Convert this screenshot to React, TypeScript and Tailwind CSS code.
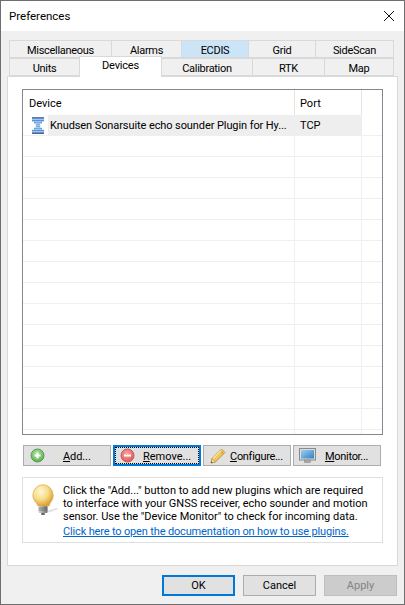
const font = { fontFamily: 'Roboto, "Liberation Sans", sans-serif' };

function Tab({ label, w, active }: { label: string; w: string; active?: boolean }) {
  return (
    <div className={`${w} h-[18px] pt-[3px] tracking-[-0.3px] flex items-center justify-center border border-[#d9d9d9] -ml-px first:ml-0 ${active ? "bg-[#cce4f7]" : "bg-[#f0f0f0]"}`}>
      {label}
    </div>
  );
}

// dotted blue hourglass: rows of small squares, narrow at the waist
function Hourglass() {
  const rows = [
    [0, 6],
    [0, 6],
    [1, 5],
    [2, 4],
    [2, 4],
    [1, 5],
    [0, 6],
    [0, 6],
  ];
  return (
    <svg width="12" height="17" viewBox="0 0 12 17">
      <rect x="0" y="0" width="12" height="1" fill="#6f7f95" />
      <rect x="0" y="16" width="12" height="1" fill="#7a5a48" />
      {rows.map(([from, to], r) =>
        Array.from({ length: to - from }).map((_, c) => (
          <rect key={`${r}-${c}`} x={(from + c) * 2 + 0.2} y={r * 2 + 0.8} width="1.6" height="1.6" fill="#2f78cf" />
        ))
      )}
      <rect x="3" y="5" width="6" height="7" fill="#bcd3ee" opacity="0.35" />
    </svg>
  );
}

function PlusIcon() {
  return (
    <svg width="15" height="15" viewBox="0 0 15 15">
      <defs>
        <radialGradient id="gp" cx="45%" cy="35%" r="70%">
          <stop offset="0" stopColor="#b4e39f" />
          <stop offset="1" stopColor="#4fae4a" />
        </radialGradient>
      </defs>
      <circle cx="7.500" cy="7.500" r="6.500" fill="url(#gp)" stroke="#5d9a55" />
      <path d="M7.500 4.500v6M4.500 7.500h6" stroke="#fff" strokeWidth="2" />
    </svg>
  );
}

function MinusIcon() {
  return (
    <svg width="15" height="15" viewBox="0 0 15 15">
      <defs>
        <radialGradient id="gm" cx="45%" cy="35%" r="70%">
          <stop offset="0" stopColor="#f7a6a0" />
          <stop offset="1" stopColor="#e2504c" />
        </radialGradient>
      </defs>
      <circle cx="7.500" cy="7.500" r="6.500" fill="url(#gm)" stroke="#b9605c" />
      <path d="M4 7.500h7" stroke="#fff" strokeWidth="2" />
    </svg>
  );
}

function PencilIcon() {
  return (
    <svg width="16" height="16" viewBox="0 0 16 16">
      <path d="M1 15l1-4.500L11.500 1 15 4.500 5.500 14z" fill="#eec65a" stroke="#b58d33" strokeWidth="0.8" />
      <path d="M10 2.500L13.500 6" stroke="#d9a24a" strokeWidth="1.600" />
      <path d="M3.200 10.500L11.500 2.200" stroke="#fbe9a8" strokeWidth="1.200" />
      <path d="M1 15l1-4.500 3.500 3.500z" fill="#f3dcb0" stroke="#b58d33" strokeWidth="0.6" />
      <path d="M1 15l.4-1.800 1.400 1.400z" fill="#5a4a30" />
    </svg>
  );
}

function MonitorIcon() {
  return (
    <svg width="17" height="16" viewBox="0 0 17 16">
      <defs>
        <linearGradient id="gs" x1="0" y1="0" x2="1" y2="1">
          <stop offset="0" stopColor="#9fd0f2" />
          <stop offset="1" stopColor="#2f7fc4" />
        </linearGradient>
      </defs>
      <rect x="0.500" y="0.500" width="16" height="11.500" fill="#dcdcdc" stroke="#8a8a8a" />
      <rect x="2" y="2" width="13" height="8.500" fill="url(#gs)" />
      <rect x="5.500" y="12" width="6" height="2.500" fill="#a8a8a8" stroke="#808080" strokeWidth="0.5" />
    </svg>
  );
}

function BulbIcon() {
  return (
    <svg width="28" height="32" viewBox="0 0 28 32">
      <defs>
        <radialGradient id="gb" cx="38%" cy="32%" r="68%">
          <stop offset="0" stopColor="#fff6d2" />
          <stop offset="0.55" stopColor="#f7dc8a" />
          <stop offset="1" stopColor="#dca236" />
        </radialGradient>
        <linearGradient id="gh" x1="0" y1="0" x2="1" y2="0">
          <stop offset="0" stopColor="#d8d8d8" />
          <stop offset="1" stopColor="#6f6f6f" />
        </linearGradient>
      </defs>
      <path d="M15 27c3-1 7-3 10-3 1 0 1 1 0 1.500-3 1.500-7 3-10 3z" fill="#cfcfcf" opacity="0.6" />
      <path d="M.8 11.500a10.200 10.800 0 0 1 20.400 0c0 5-3.500 7-4.200 10.500H6C5 18.500.8 16.500.8 11.500z" fill="url(#gb)" stroke="#dcaa48" strokeWidth="0.7" />
      <rect x="6.500" y="22" width="9" height="7" rx="1" fill="url(#gh)" />
      <path d="M6.500 24h9M6.500 26h9" stroke="#555" strokeWidth="0.6" />
      <rect x="9" y="29" width="4" height="2" rx="1" fill="#666" />
    </svg>
  );
}

function ActionButton({ icon, u, post, focused, textClass, padClass }: { icon: React.ReactNode; u: string; post: string; focused?: boolean; textClass: string; padClass: string }) {
  return (
    <div className={`w-[88px] h-[21px] bg-[#e1e1e1] flex items-center ${focused ? "border-2 border-[#0078d7] outline-1 outline-dotted -outline-offset-3 outline-black" : "border border-[#adadad]"}`}>
      <div className={`shrink-0 flex items-center ${padClass}`}>{icon}</div>
      <span className={`whitespace-nowrap pt-[2px] ${textClass}`}>
        <span className="underline">{u}</span>
        {post}
      </span>
    </div>
  );
}

function DialogButton({ label, focused, disabled }: { label: string; focused?: boolean; disabled?: boolean }) {
  return (
    <div
      className={`w-[73px] h-[21px] flex items-center justify-center ${
        focused ? "border-2 border-[#0078d7] bg-[#e1e1e1]" : disabled ? "border border-[#bfbfbf] bg-[#cccccc] text-[#838383]" : "border border-[#adadad] bg-[#e1e1e1]"
      }`}
    >
      {label}
    </div>
  );
}

export default function App() {
  const row1 = [
    { label: "Miscellaneous", w: "w-[103px]" },
    { label: "Alarms", w: "w-[71px]" },
    { label: "ECDIS", w: "w-[68px]", active: true },
    { label: "Grid", w: "w-[68px]" },
    { label: "SideScan", w: "w-[79px]" },
  ];
  const emptyRows = Array.from({ length: 14 });

  return (
    <div style={font} className="w-[405px] h-[605px] bg-[#f0f0f0] border border-[#6e6e6e] text-[11px] leading-[16px] text-black flex flex-col overflow-hidden">
      <div className="h-[30px] bg-white flex items-center justify-between pl-[8px] pr-[9px] shrink-0">
        <span className="text-[11.5px]">Preferences</span>
        <svg width="12" height="12" viewBox="0 0 12 12">
          <path d="M1 1l10 10M11 1L1 11" stroke="#111" strokeWidth="1" />
        </svg>
      </div>

      <div className="mt-[9px] pl-[8px] flex shrink-0">
        {row1.map((t) => (
          <Tab key={t.label} {...t} />
        ))}
      </div>
      <div className="pl-[8px] flex shrink-0 h-[18px] relative z-10">
        <Tab label="Units" w="w-[71px]" />
        <div className="w-[83px] h-[21px] -mt-[2px] -ml-px pb-[2px] tracking-[-0.2px] flex items-center justify-center bg-white border border-[#d9d9d9] border-b-0 relative z-10">
          Devices
        </div>
        <Tab label="Calibration" w="w-[92px]" />
        <Tab label="RTK" w="w-[73px]" />
        <Tab label="Map" w="w-[70px]" />
      </div>

      <div className="mx-[6px] h-[490px] bg-white border border-[#d9d9d9] px-[14px] pt-[12px] shrink-0">
        <div className="h-[346px] border border-[#828790] overflow-hidden">
          <div className="h-[25px] flex items-center">
            <div className="w-[272px] pl-[6px] pt-[2px] h-full flex items-center border-r border-[#e5e5e5]">Device</div>
            <div className="w-[67px] pl-[5px] pt-[2px] h-full flex items-center border-r border-[#e5e5e5]">Port</div>
          </div>
          <div className="h-[21px] flex items-center border-b border-[#efefef]">
            <div className="w-[25px] h-full flex items-center pl-[9px] shrink-0">
              <Hourglass />
            </div>
            <div className="w-[247px] h-full pt-[2px] bg-[#eeeeee] flex items-center pl-[2px] tracking-[-0.09px] whitespace-nowrap overflow-hidden">
              Knudsen Sonarsuite echo sounder Plugin for Hy...
            </div>
            <div className="w-[67px] h-full pt-[2px] bg-[#eeeeee] pl-[5px] flex items-center">TCP</div>
          </div>
          {emptyRows.map((_, i) => (
            <div key={i} className="h-[21px] flex border-b border-[#efefef]">
              <div className="w-[272px] border-r border-[#efefef]" />
              <div className="w-[67px] border-r border-[#efefef]" />
            </div>
          ))}
          <div className="h-[20px] flex">
            <div className="w-[272px] border-r border-[#efefef]" />
            <div className="w-[67px] border-r border-[#efefef]" />
          </div>
        </div>

        <div className="mt-[10px] ml-[1px] flex gap-[2px]">
          <ActionButton icon={<PlusIcon />} u="A" post="dd..." padClass="pl-[6px]" textClass="ml-[18px] tracking-[-0.1px]" />
          <ActionButton icon={<MinusIcon />} u="R" post="emove..." focused padClass="pl-[5px]" textClass="ml-[8px]" />
          <ActionButton icon={<PencilIcon />} u="C" post="onfigure..." padClass="pl-[6px]" textClass="ml-[4px] tracking-[-0.3px]" />
          <ActionButton icon={<MonitorIcon />} u="M" post="onitor..." padClass="pl-[5px]" textClass="ml-[9px] tracking-[-0.3px]" />
        </div>

        <div className="mt-[11px] h-[66px] border border-[#dfdfdf] flex">
          <div className="w-[40px] pl-[9px] pt-[6px] shrink-0">
            <BulbIcon />
          </div>
          <div className="pt-[6px] whitespace-nowrap leading-[13px]">
            <div>Click the "Add..." button to add new plugins which are required</div>
            <div>to interface with your GNSS receiver, echo sounder and motion</div>
            <div>sensor. Use the "Device Monitor" to check for incoming data.</div>
            <div className="mt-[2px] text-[#0066cc] underline tracking-[-0.155px]">Click here to open the documentation on how to use plugins.</div>
          </div>
        </div>
      </div>

      <div className="mt-[9px] pr-[7px] flex justify-end gap-[8px]">
        <DialogButton label="OK" focused />
        <DialogButton label="Cancel" />
        <DialogButton label="Apply" disabled />
      </div>
    </div>
  );
}
